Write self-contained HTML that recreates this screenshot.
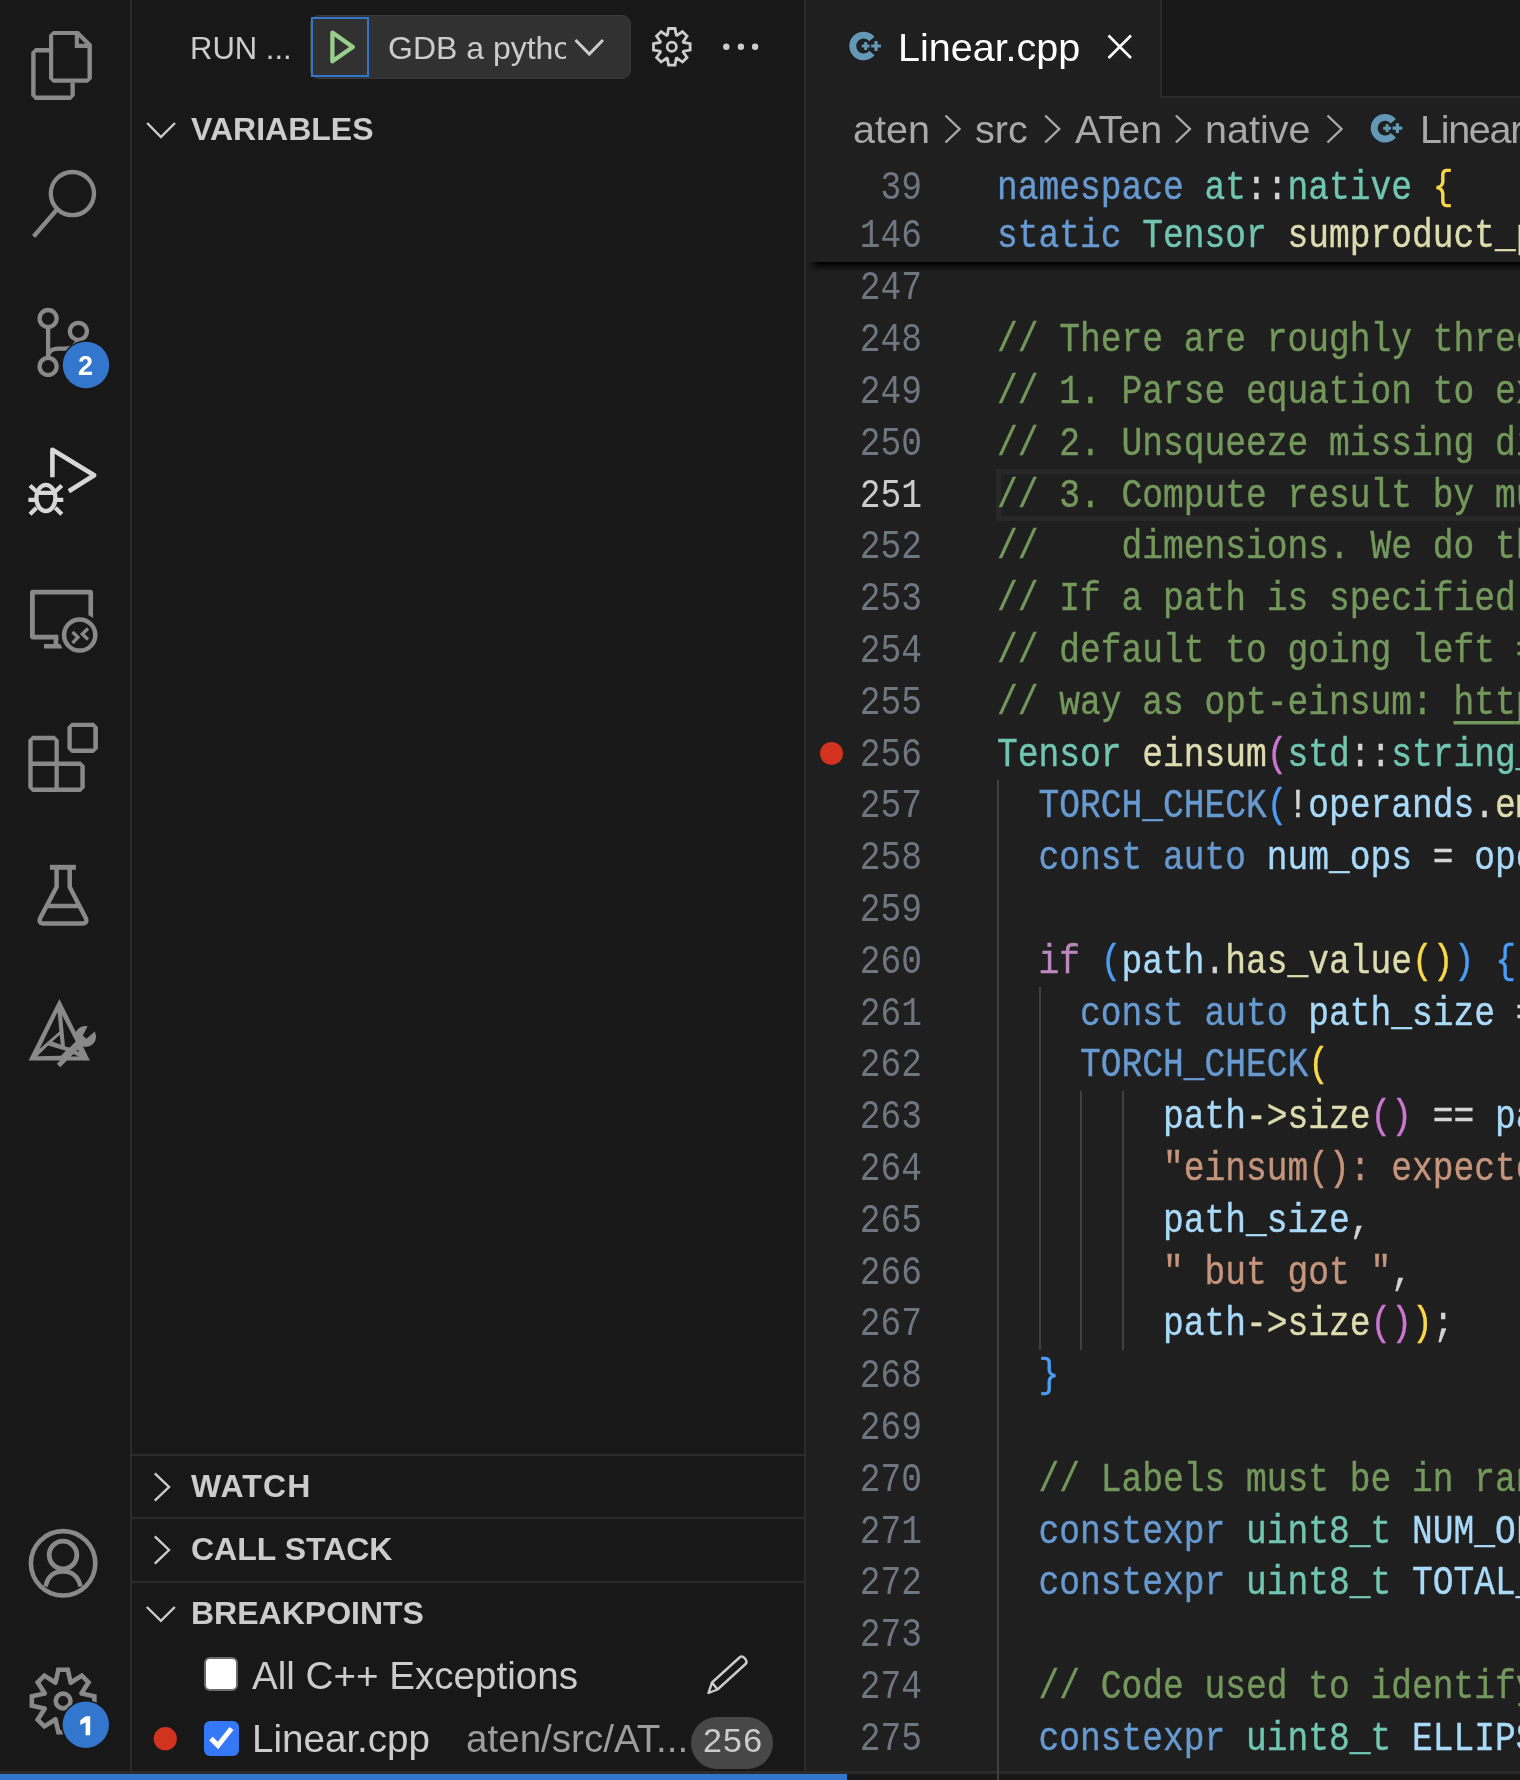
<!DOCTYPE html>
<html><head><meta charset="utf-8"><style>
html,body{margin:0;padding:0;}
body{width:1520px;height:1780px;position:relative;overflow:hidden;background:#181818;}
.t{position:absolute;white-space:pre;will-change:transform;}
</style></head><body>
<div style="position:absolute;left:0px;top:0px;width:130px;height:1780px;background:#181818;"></div><div style="position:absolute;left:130px;top:0px;width:2px;height:1780px;background:#2b2b2b;"></div><div style="position:absolute;left:132px;top:0px;width:672px;height:1780px;background:#181818;"></div><div style="position:absolute;left:804px;top:0px;width:2px;height:1780px;background:#2b2b2b;"></div><div style="position:absolute;left:806px;top:0px;width:714px;height:1780px;background:#1f1f1f;"></div><div style="position:absolute;left:1162px;top:0px;width:358px;height:96px;background:#181818;"></div><div style="position:absolute;left:1160px;top:0px;width:2px;height:98px;background:#2b2b2b;"></div><div style="position:absolute;left:1160px;top:96px;width:360px;height:2px;background:#2b2b2b;"></div><div style="position:absolute;left:0px;top:1771px;width:1520px;height:3px;background:#2b2b2b;"></div><div style="position:absolute;left:0px;top:1774px;width:847px;height:6px;background:#3376cd;"></div><div style="position:absolute;left:847px;top:1774px;width:673px;height:6px;background:#181818;"></div><div style="position:absolute;left:132px;top:1454px;width:672px;height:2px;background:#2b2b2b;"></div><div style="position:absolute;left:132px;top:1517px;width:672px;height:2px;background:#2b2b2b;"></div><div style="position:absolute;left:132px;top:1581px;width:672px;height:2px;background:#2b2b2b;"></div><div class="t" style="left:189.60px;top:31.95px;font-size:31px;line-height:34.63px;color:#cccccc;font-weight:normal;font-family:'Liberation Sans', sans-serif;letter-spacing:0px;">RUN ...</div><div style="position:absolute;left:309.5px;top:15px;width:321px;height:64px;background:#313131;border-radius:9px;box-sizing:border-box;border:1.5px solid #3a3a3a;"></div><div style="position:absolute;left:311px;top:17px;width:57.5px;height:60px;background:transparent;box-sizing:border-box;border:2px solid #3376cd;"></div><div style="position:absolute;left:388px;top:15px;width:178px;height:64px;overflow:hidden"><div class="t" style="left:-0.5px;top:15.64px;font-size:32px;line-height:35.74px;color:#cccccc;font-family:'Liberation Sans', sans-serif">GDB a python</div></div><div class="t" style="left:191.00px;top:111.94px;font-size:32px;line-height:35.74px;color:#cccccc;font-weight:bold;font-family:'Liberation Sans', sans-serif;letter-spacing:0px;">VARIABLES</div><div class="t" style="left:191.00px;top:1469.24px;font-size:32px;line-height:35.74px;color:#cccccc;font-weight:bold;font-family:'Liberation Sans', sans-serif;letter-spacing:1.1px;">WATCH</div><div class="t" style="left:191.00px;top:1532.24px;font-size:32px;line-height:35.74px;color:#cccccc;font-weight:bold;font-family:'Liberation Sans', sans-serif;letter-spacing:0px;">CALL STACK</div><div class="t" style="left:191.00px;top:1596.04px;font-size:32px;line-height:35.74px;color:#cccccc;font-weight:bold;font-family:'Liberation Sans', sans-serif;letter-spacing:0px;">BREAKPOINTS</div><div class="t" style="left:251.60px;top:1654.27px;font-size:38.6px;line-height:43.12px;color:#cccccc;font-weight:normal;font-family:'Liberation Sans', sans-serif;letter-spacing:0px;">All C++ Exceptions</div><div class="t" style="left:251.60px;top:1717.47px;font-size:38.6px;line-height:43.12px;color:#cccccc;font-weight:normal;font-family:'Liberation Sans', sans-serif;letter-spacing:0px;">Linear.cpp</div><div class="t" style="left:465.70px;top:1717.07px;font-size:38.6px;line-height:43.12px;color:#9d9d9d;font-weight:normal;font-family:'Liberation Sans', sans-serif;letter-spacing:0px;">aten/src/AT...</div><div style="position:absolute;left:690.6px;top:1717px;width:82px;height:51.7px;background:#474747;border-radius:26px;"></div><div class="t" style="left:703.30px;top:1721.23px;font-size:34px;line-height:37.98px;color:#cccccc;font-weight:normal;font-family:'Liberation Sans', sans-serif;letter-spacing:1.2px;">256</div><div style="position:absolute;left:204.2px;top:1657.2px;width:34.3px;height:34.3px;background:#ffffff;box-sizing:border-box;border:2.5px solid #6b6b6b;border-radius:6px;"></div><div style="position:absolute;left:204px;top:1721.2px;width:34.8px;height:34.8px;background:#3478f6;border-radius:6px;"></div><div class="t" style="left:898.00px;top:25.25px;font-size:39.5px;line-height:44.12px;color:#ffffff;font-weight:normal;font-family:'Liberation Sans', sans-serif;letter-spacing:0px;">Linear.cpp</div><div class="t" style="left:853.00px;top:107.25px;font-size:39.5px;line-height:44.12px;color:#a9a9a9;font-weight:normal;font-family:'Liberation Sans', sans-serif;letter-spacing:0px;">aten</div><div class="t" style="left:975.30px;top:107.25px;font-size:39.5px;line-height:44.12px;color:#a9a9a9;font-weight:normal;font-family:'Liberation Sans', sans-serif;letter-spacing:0px;">src</div><div class="t" style="left:1074.90px;top:107.25px;font-size:39.5px;line-height:44.12px;color:#a9a9a9;font-weight:normal;font-family:'Liberation Sans', sans-serif;letter-spacing:0px;">ATen</div><div class="t" style="left:1204.70px;top:107.25px;font-size:39.5px;line-height:44.12px;color:#a9a9a9;font-weight:normal;font-family:'Liberation Sans', sans-serif;letter-spacing:0px;">native</div><div class="t" style="left:1419.50px;top:107.25px;font-size:39.5px;line-height:44.12px;color:#a9a9a9;font-weight:normal;font-family:'Liberation Sans', sans-serif;letter-spacing:-1.3px;">Linear</div><div class="t" style="left:700px;width:222px;text-align:right;top:169.69px;font-size:34.58px;line-height:39.18px;font-family:'Liberation Mono', monospace;color:#6f7680;transform:scaleY(1.16);transform-origin:0 28.81px">39</div><div class="t" style="left:996.5px;top:169.69px;font-size:34.58px;line-height:39.18px;font-family:'Liberation Mono', monospace;-webkit-text-stroke:0.35px currentColor;transform:scaleY(1.16);transform-origin:0 28.81px"><span style="color:#679ad1">namespace</span><span style="color:#d4d4d4"> </span><span style="color:#71c6b1">at</span><span style="color:#d4d4d4">::</span><span style="color:#71c6b1">native</span><span style="color:#d4d4d4"> </span><span style="color:#f9d849">{</span></div><div class="t" style="left:700px;width:222px;text-align:right;top:218.29px;font-size:34.58px;line-height:39.18px;font-family:'Liberation Mono', monospace;color:#6f7680;transform:scaleY(1.16);transform-origin:0 28.81px">146</div><div class="t" style="left:996.5px;top:218.29px;font-size:34.58px;line-height:39.18px;font-family:'Liberation Mono', monospace;-webkit-text-stroke:0.35px currentColor;transform:scaleY(1.16);transform-origin:0 28.81px"><span style="color:#679ad1">static</span><span style="color:#d4d4d4"> </span><span style="color:#71c6b1">Tensor</span><span style="color:#d4d4d4"> </span><span style="color:#dcdcaf">sumproduct_pair</span></div><div style="position:absolute;left:806px;top:261.6px;width:714px;height:10px;background:linear-gradient(#000000 0%, rgba(0,0,0,0.6) 35%, rgba(0,0,0,0) 100%);-webkit-mask-image:linear-gradient(to right, rgba(0,0,0,0) 2px, #000 13px);mask-image:linear-gradient(to right, rgba(0,0,0,0) 2px, #000 13px)"></div><div style="position:absolute;left:996px;top:469.1px;width:600px;height:51.8px;background:transparent;box-sizing:border-box;border:5px solid #282828;"></div><div style="position:absolute;left:997.0px;top:779.9px;width:2px;height:1036.0px;background:#404040;"></div><div style="position:absolute;left:1038.5px;top:987.1px;width:2px;height:362.6px;background:#404040;"></div><div style="position:absolute;left:1080.0px;top:1090.7px;width:2px;height:259.0px;background:#404040;"></div><div style="position:absolute;left:1121.5px;top:1090.7px;width:2px;height:259.0px;background:#404040;"></div><div class="t" style="left:700px;width:222px;text-align:right;top:270.49px;font-size:34.58px;line-height:39.18px;font-family:'Liberation Mono', monospace;color:#6f7680;transform:scaleY(1.16);transform-origin:0 28.81px">247</div><div class="t" style="left:700px;width:222px;text-align:right;top:322.29px;font-size:34.58px;line-height:39.18px;font-family:'Liberation Mono', monospace;color:#6f7680;transform:scaleY(1.16);transform-origin:0 28.81px">248</div><div class="t" style="left:996.5px;top:322.29px;font-size:34.58px;line-height:39.18px;font-family:'Liberation Mono', monospace;-webkit-text-stroke:0.35px currentColor;transform:scaleY(1.16);transform-origin:0 28.81px"><span style="color:#74985c">// There are roughly three main steps</span></div><div class="t" style="left:700px;width:222px;text-align:right;top:374.09px;font-size:34.58px;line-height:39.18px;font-family:'Liberation Mono', monospace;color:#6f7680;transform:scaleY(1.16);transform-origin:0 28.81px">249</div><div class="t" style="left:996.5px;top:374.09px;font-size:34.58px;line-height:39.18px;font-family:'Liberation Mono', monospace;-webkit-text-stroke:0.35px currentColor;transform:scaleY(1.16);transform-origin:0 28.81px"><span style="color:#74985c">// 1. Parse equation to extract</span></div><div class="t" style="left:700px;width:222px;text-align:right;top:425.89px;font-size:34.58px;line-height:39.18px;font-family:'Liberation Mono', monospace;color:#6f7680;transform:scaleY(1.16);transform-origin:0 28.81px">250</div><div class="t" style="left:996.5px;top:425.89px;font-size:34.58px;line-height:39.18px;font-family:'Liberation Mono', monospace;-webkit-text-stroke:0.35px currentColor;transform:scaleY(1.16);transform-origin:0 28.81px"><span style="color:#74985c">// 2. Unsqueeze missing dimensions</span></div><div class="t" style="left:700px;width:222px;text-align:right;top:477.69px;font-size:34.58px;line-height:39.18px;font-family:'Liberation Mono', monospace;color:#cccccc;transform:scaleY(1.16);transform-origin:0 28.81px">251</div><div class="t" style="left:996.5px;top:477.69px;font-size:34.58px;line-height:39.18px;font-family:'Liberation Mono', monospace;-webkit-text-stroke:0.35px currentColor;transform:scaleY(1.16);transform-origin:0 28.81px"><span style="color:#74985c">// 3. Compute result by multiplying</span></div><div class="t" style="left:700px;width:222px;text-align:right;top:529.49px;font-size:34.58px;line-height:39.18px;font-family:'Liberation Mono', monospace;color:#6f7680;transform:scaleY(1.16);transform-origin:0 28.81px">252</div><div class="t" style="left:996.5px;top:529.49px;font-size:34.58px;line-height:39.18px;font-family:'Liberation Mono', monospace;-webkit-text-stroke:0.35px currentColor;transform:scaleY(1.16);transform-origin:0 28.81px"><span style="color:#74985c">//    dimensions. We do this</span></div><div class="t" style="left:700px;width:222px;text-align:right;top:581.29px;font-size:34.58px;line-height:39.18px;font-family:'Liberation Mono', monospace;color:#6f7680;transform:scaleY(1.16);transform-origin:0 28.81px">253</div><div class="t" style="left:996.5px;top:581.29px;font-size:34.58px;line-height:39.18px;font-family:'Liberation Mono', monospace;-webkit-text-stroke:0.35px currentColor;transform:scaleY(1.16);transform-origin:0 28.81px"><span style="color:#74985c">// If a path is specified,</span></div><div class="t" style="left:700px;width:222px;text-align:right;top:633.09px;font-size:34.58px;line-height:39.18px;font-family:'Liberation Mono', monospace;color:#6f7680;transform:scaleY(1.16);transform-origin:0 28.81px">254</div><div class="t" style="left:996.5px;top:633.09px;font-size:34.58px;line-height:39.18px;font-family:'Liberation Mono', monospace;-webkit-text-stroke:0.35px currentColor;transform:scaleY(1.16);transform-origin:0 28.81px"><span style="color:#74985c">// default to going left =&gt; right</span></div><div class="t" style="left:700px;width:222px;text-align:right;top:684.89px;font-size:34.58px;line-height:39.18px;font-family:'Liberation Mono', monospace;color:#6f7680;transform:scaleY(1.16);transform-origin:0 28.81px">255</div><div class="t" style="left:996.5px;top:684.89px;font-size:34.58px;line-height:39.18px;font-family:'Liberation Mono', monospace;-webkit-text-stroke:0.35px currentColor;transform:scaleY(1.16);transform-origin:0 28.81px"><span style="color:#74985c">// way as opt-einsum: </span><span style="color:#74985c;text-decoration:underline;text-underline-offset:6px;text-decoration-thickness:3px;text-decoration-skip-ink:none">htt</span><span style="color:#74985c;text-decoration:underline;text-underline-offset:6px;text-decoration-thickness:3px;text-decoration-skip-ink:none">p</span></div><div class="t" style="left:700px;width:222px;text-align:right;top:736.69px;font-size:34.58px;line-height:39.18px;font-family:'Liberation Mono', monospace;color:#6f7680;transform:scaleY(1.16);transform-origin:0 28.81px">256</div><div class="t" style="left:996.5px;top:736.69px;font-size:34.58px;line-height:39.18px;font-family:'Liberation Mono', monospace;-webkit-text-stroke:0.35px currentColor;transform:scaleY(1.16);transform-origin:0 28.81px"><span style="color:#71c6b1">Tensor</span><span style="color:#d4d4d4"> </span><span style="color:#dcdcaf">einsum</span><span style="color:#cc76d1">(</span><span style="color:#71c6b1">std</span><span style="color:#d4d4d4">::</span><span style="color:#71c6b1">string_view</span></div><div class="t" style="left:700px;width:222px;text-align:right;top:788.49px;font-size:34.58px;line-height:39.18px;font-family:'Liberation Mono', monospace;color:#6f7680;transform:scaleY(1.16);transform-origin:0 28.81px">257</div><div class="t" style="left:996.5px;top:788.49px;font-size:34.58px;line-height:39.18px;font-family:'Liberation Mono', monospace;-webkit-text-stroke:0.35px currentColor;transform:scaleY(1.16);transform-origin:0 28.81px"><span style="color:#d4d4d4">  </span><span style="color:#679ad1">TORCH_CHECK</span><span style="color:#4a9df8">(</span><span style="color:#d4d4d4">!</span><span style="color:#aadafa">operands</span><span style="color:#d4d4d4">.</span><span style="color:#dcdcaf">empty</span></div><div class="t" style="left:700px;width:222px;text-align:right;top:840.29px;font-size:34.58px;line-height:39.18px;font-family:'Liberation Mono', monospace;color:#6f7680;transform:scaleY(1.16);transform-origin:0 28.81px">258</div><div class="t" style="left:996.5px;top:840.29px;font-size:34.58px;line-height:39.18px;font-family:'Liberation Mono', monospace;-webkit-text-stroke:0.35px currentColor;transform:scaleY(1.16);transform-origin:0 28.81px"><span style="color:#d4d4d4">  </span><span style="color:#679ad1">const</span><span style="color:#d4d4d4"> </span><span style="color:#679ad1">auto</span><span style="color:#d4d4d4"> </span><span style="color:#aadafa">num_ops</span><span style="color:#d4d4d4"> = </span><span style="color:#aadafa">operands</span></div><div class="t" style="left:700px;width:222px;text-align:right;top:892.09px;font-size:34.58px;line-height:39.18px;font-family:'Liberation Mono', monospace;color:#6f7680;transform:scaleY(1.16);transform-origin:0 28.81px">259</div><div class="t" style="left:700px;width:222px;text-align:right;top:943.89px;font-size:34.58px;line-height:39.18px;font-family:'Liberation Mono', monospace;color:#6f7680;transform:scaleY(1.16);transform-origin:0 28.81px">260</div><div class="t" style="left:996.5px;top:943.89px;font-size:34.58px;line-height:39.18px;font-family:'Liberation Mono', monospace;-webkit-text-stroke:0.35px currentColor;transform:scaleY(1.16);transform-origin:0 28.81px"><span style="color:#d4d4d4">  </span><span style="color:#bc89bd">if</span><span style="color:#d4d4d4"> </span><span style="color:#4a9df8">(</span><span style="color:#aadafa">path</span><span style="color:#d4d4d4">.</span><span style="color:#dcdcaf">has_value</span><span style="color:#f9d849">()</span><span style="color:#4a9df8">)</span><span style="color:#d4d4d4"> </span><span style="color:#4a9df8">{</span></div><div class="t" style="left:700px;width:222px;text-align:right;top:995.69px;font-size:34.58px;line-height:39.18px;font-family:'Liberation Mono', monospace;color:#6f7680;transform:scaleY(1.16);transform-origin:0 28.81px">261</div><div class="t" style="left:996.5px;top:995.69px;font-size:34.58px;line-height:39.18px;font-family:'Liberation Mono', monospace;-webkit-text-stroke:0.35px currentColor;transform:scaleY(1.16);transform-origin:0 28.81px"><span style="color:#d4d4d4">    </span><span style="color:#679ad1">const</span><span style="color:#d4d4d4"> </span><span style="color:#679ad1">auto</span><span style="color:#d4d4d4"> </span><span style="color:#aadafa">path_size</span><span style="color:#d4d4d4"> = </span></div><div class="t" style="left:700px;width:222px;text-align:right;top:1047.49px;font-size:34.58px;line-height:39.18px;font-family:'Liberation Mono', monospace;color:#6f7680;transform:scaleY(1.16);transform-origin:0 28.81px">262</div><div class="t" style="left:996.5px;top:1047.49px;font-size:34.58px;line-height:39.18px;font-family:'Liberation Mono', monospace;-webkit-text-stroke:0.35px currentColor;transform:scaleY(1.16);transform-origin:0 28.81px"><span style="color:#d4d4d4">    </span><span style="color:#679ad1">TORCH_CHECK</span><span style="color:#f9d849">(</span></div><div class="t" style="left:700px;width:222px;text-align:right;top:1099.29px;font-size:34.58px;line-height:39.18px;font-family:'Liberation Mono', monospace;color:#6f7680;transform:scaleY(1.16);transform-origin:0 28.81px">263</div><div class="t" style="left:996.5px;top:1099.29px;font-size:34.58px;line-height:39.18px;font-family:'Liberation Mono', monospace;-webkit-text-stroke:0.35px currentColor;transform:scaleY(1.16);transform-origin:0 28.81px"><span style="color:#d4d4d4">        </span><span style="color:#aadafa">path</span><span style="color:#dcdcaf">-&gt;</span><span style="color:#dcdcaf">size</span><span style="color:#cc76d1">()</span><span style="color:#d4d4d4"> == </span><span style="color:#aadafa">path_size</span></div><div class="t" style="left:700px;width:222px;text-align:right;top:1151.09px;font-size:34.58px;line-height:39.18px;font-family:'Liberation Mono', monospace;color:#6f7680;transform:scaleY(1.16);transform-origin:0 28.81px">264</div><div class="t" style="left:996.5px;top:1151.09px;font-size:34.58px;line-height:39.18px;font-family:'Liberation Mono', monospace;-webkit-text-stroke:0.35px currentColor;transform:scaleY(1.16);transform-origin:0 28.81px"><span style="color:#d4d4d4">        </span><span style="color:#c5947c">&quot;einsum(): expected</span></div><div class="t" style="left:700px;width:222px;text-align:right;top:1202.89px;font-size:34.58px;line-height:39.18px;font-family:'Liberation Mono', monospace;color:#6f7680;transform:scaleY(1.16);transform-origin:0 28.81px">265</div><div class="t" style="left:996.5px;top:1202.89px;font-size:34.58px;line-height:39.18px;font-family:'Liberation Mono', monospace;-webkit-text-stroke:0.35px currentColor;transform:scaleY(1.16);transform-origin:0 28.81px"><span style="color:#d4d4d4">        </span><span style="color:#aadafa">path_size</span><span style="color:#d4d4d4">,</span></div><div class="t" style="left:700px;width:222px;text-align:right;top:1254.69px;font-size:34.58px;line-height:39.18px;font-family:'Liberation Mono', monospace;color:#6f7680;transform:scaleY(1.16);transform-origin:0 28.81px">266</div><div class="t" style="left:996.5px;top:1254.69px;font-size:34.58px;line-height:39.18px;font-family:'Liberation Mono', monospace;-webkit-text-stroke:0.35px currentColor;transform:scaleY(1.16);transform-origin:0 28.81px"><span style="color:#d4d4d4">        </span><span style="color:#c5947c">&quot; but got &quot;</span><span style="color:#d4d4d4">,</span></div><div class="t" style="left:700px;width:222px;text-align:right;top:1306.49px;font-size:34.58px;line-height:39.18px;font-family:'Liberation Mono', monospace;color:#6f7680;transform:scaleY(1.16);transform-origin:0 28.81px">267</div><div class="t" style="left:996.5px;top:1306.49px;font-size:34.58px;line-height:39.18px;font-family:'Liberation Mono', monospace;-webkit-text-stroke:0.35px currentColor;transform:scaleY(1.16);transform-origin:0 28.81px"><span style="color:#d4d4d4">        </span><span style="color:#aadafa">path</span><span style="color:#dcdcaf">-&gt;</span><span style="color:#dcdcaf">size</span><span style="color:#cc76d1">()</span><span style="color:#f9d849">)</span><span style="color:#d4d4d4">;</span></div><div class="t" style="left:700px;width:222px;text-align:right;top:1358.29px;font-size:34.58px;line-height:39.18px;font-family:'Liberation Mono', monospace;color:#6f7680;transform:scaleY(1.16);transform-origin:0 28.81px">268</div><div class="t" style="left:996.5px;top:1358.29px;font-size:34.58px;line-height:39.18px;font-family:'Liberation Mono', monospace;-webkit-text-stroke:0.35px currentColor;transform:scaleY(1.16);transform-origin:0 28.81px"><span style="color:#d4d4d4">  </span><span style="color:#4a9df8">}</span></div><div class="t" style="left:700px;width:222px;text-align:right;top:1410.09px;font-size:34.58px;line-height:39.18px;font-family:'Liberation Mono', monospace;color:#6f7680;transform:scaleY(1.16);transform-origin:0 28.81px">269</div><div class="t" style="left:700px;width:222px;text-align:right;top:1461.89px;font-size:34.58px;line-height:39.18px;font-family:'Liberation Mono', monospace;color:#6f7680;transform:scaleY(1.16);transform-origin:0 28.81px">270</div><div class="t" style="left:996.5px;top:1461.89px;font-size:34.58px;line-height:39.18px;font-family:'Liberation Mono', monospace;-webkit-text-stroke:0.35px currentColor;transform:scaleY(1.16);transform-origin:0 28.81px"><span style="color:#d4d4d4">  </span><span style="color:#74985c">// Labels must be in range</span></div><div class="t" style="left:700px;width:222px;text-align:right;top:1513.69px;font-size:34.58px;line-height:39.18px;font-family:'Liberation Mono', monospace;color:#6f7680;transform:scaleY(1.16);transform-origin:0 28.81px">271</div><div class="t" style="left:996.5px;top:1513.69px;font-size:34.58px;line-height:39.18px;font-family:'Liberation Mono', monospace;-webkit-text-stroke:0.35px currentColor;transform:scaleY(1.16);transform-origin:0 28.81px"><span style="color:#d4d4d4">  </span><span style="color:#679ad1">constexpr</span><span style="color:#d4d4d4"> </span><span style="color:#71c6b1">uint8_t</span><span style="color:#d4d4d4"> </span><span style="color:#aadafa">NUM_OF_LETTERS</span></div><div class="t" style="left:700px;width:222px;text-align:right;top:1565.49px;font-size:34.58px;line-height:39.18px;font-family:'Liberation Mono', monospace;color:#6f7680;transform:scaleY(1.16);transform-origin:0 28.81px">272</div><div class="t" style="left:996.5px;top:1565.49px;font-size:34.58px;line-height:39.18px;font-family:'Liberation Mono', monospace;-webkit-text-stroke:0.35px currentColor;transform:scaleY(1.16);transform-origin:0 28.81px"><span style="color:#d4d4d4">  </span><span style="color:#679ad1">constexpr</span><span style="color:#d4d4d4"> </span><span style="color:#71c6b1">uint8_t</span><span style="color:#d4d4d4"> </span><span style="color:#aadafa">TOTAL_LABELS</span></div><div class="t" style="left:700px;width:222px;text-align:right;top:1617.29px;font-size:34.58px;line-height:39.18px;font-family:'Liberation Mono', monospace;color:#6f7680;transform:scaleY(1.16);transform-origin:0 28.81px">273</div><div class="t" style="left:700px;width:222px;text-align:right;top:1669.09px;font-size:34.58px;line-height:39.18px;font-family:'Liberation Mono', monospace;color:#6f7680;transform:scaleY(1.16);transform-origin:0 28.81px">274</div><div class="t" style="left:996.5px;top:1669.09px;font-size:34.58px;line-height:39.18px;font-family:'Liberation Mono', monospace;-webkit-text-stroke:0.35px currentColor;transform:scaleY(1.16);transform-origin:0 28.81px"><span style="color:#d4d4d4">  </span><span style="color:#74985c">// Code used to identify</span></div><div class="t" style="left:700px;width:222px;text-align:right;top:1720.89px;font-size:34.58px;line-height:39.18px;font-family:'Liberation Mono', monospace;color:#6f7680;transform:scaleY(1.16);transform-origin:0 28.81px">275</div><div class="t" style="left:996.5px;top:1720.89px;font-size:34.58px;line-height:39.18px;font-family:'Liberation Mono', monospace;-webkit-text-stroke:0.35px currentColor;transform:scaleY(1.16);transform-origin:0 28.81px"><span style="color:#d4d4d4">  </span><span style="color:#679ad1">constexpr</span><span style="color:#d4d4d4"> </span><span style="color:#71c6b1">uint8_t</span><span style="color:#d4d4d4"> </span><span style="color:#aadafa">ELLIPSIS</span></div><div style="position:absolute;left:820.3px;top:742.4px;width:23px;height:23px;border-radius:50%;background:#d2331f"></div><svg style="position:absolute;left:0;top:0" width="1520" height="1780" viewBox="0 0 1520 1780"><path fill-rule="evenodd" fill="#898989" d="M49 35.1 L53.1 31 L78.6 31 L91.9 44.3 L91.9 78.7 L87.8 82.8 L53.1 82.8 L49 78.7 Z M53.2 35.1 L74.8 35.1 L74.8 48.1 L87.5 48.1 L87.5 78.6 L53.2 78.6 Z M78.9 37.2 L85.3 43.7 L78.9 43.7 Z"/><path fill="#898989" d="M31.2 52.2 L35.3 48.1 L49 48.1 L49 52.4 L35.6 52.4 L35.6 95.5 L70.5 95.5 L70.5 82.8 L74.8 82.8 L74.8 95.8 L70.7 99.9 L35.3 99.9 L31.2 95.8 Z"/><circle cx="72.4" cy="193.6" r="21.6" stroke="#898989" fill="none" stroke-width="4.3"/><line x1="57" y1="209.5" x2="33.6" y2="236.5" stroke="#898989" stroke-width="4.3"/><circle cx="48.1" cy="318.5" r="8.5" stroke="#898989" fill="none" stroke-width="4.3"/><circle cx="78.4" cy="331.3" r="8.5" stroke="#898989" fill="none" stroke-width="4.3"/><circle cx="48.1" cy="366.4" r="8.5" stroke="#898989" fill="none" stroke-width="4.3"/><path d="M48.1 327 L48.1 358 M48.1 357 C48.1 352 52 348.6 58 348.6 L66 348.6 C72 348.6 76 345 78 340" stroke="#898989" fill="none" stroke-width="4.3"/><path d="M52.4 477.3 L52.4 449.7 L94.2 475.2 L68.8 491.3" stroke="#d7d7d7" stroke-width="4.6" fill="none" stroke-linejoin="round"/><ellipse cx="45.9" cy="498" rx="9.5" ry="13.2" stroke="#d7d7d7" fill="none" stroke-width="4.3"/><path d="M36.5 492.8 L55.3 492.8 M28.4 499.8 L36 499.8 M55.8 499.8 L63.3 499.8 M30 485.5 L36.5 491.5 M61.8 485.5 L55.3 491.5 M30 514.2 L36.5 507.8 M61.8 514.2 L55.3 507.8" stroke="#d7d7d7" stroke-width="4.3" fill="none"/><path fill-rule="evenodd" fill="#898989" d="M33 589.8 L90.1 589.8 Q93.1 589.8 93.1 592.8 L93.1 639.5 L33 639.5 Q30 639.5 30 636.5 L30 592.8 Q30 589.8 33 589.8 Z M34.8 594.6 L34.8 634.8 L88.4 634.8 L88.4 594.6 Z"/><path fill="#898989" d="M44 644 L62 644 L62 648.4 L44 648.4 Z M53.6 639 L58.2 639 L58.2 644.5 L53.6 644.5 Z"/><circle cx="79.7" cy="635" r="21.6" fill="#181818"/><circle cx="79.7" cy="635" r="15.6" stroke="#898989" stroke-width="4.5" fill="none"/><path d="M72.5 632 L78 637.3 L72.5 643 M88 628.5 L82.3 634 L88 639.5" stroke="#898989" stroke-width="3.3" fill="none"/><path fill-rule="evenodd" fill="#898989" d="M28.3 740 L32.4 735.8 L54.6 735.8 L58.8 740 L58.8 761.6 L80.6 761.6 L84.8 765.8 L84.8 787.8 L80.6 792 L32.4 792 L28.3 787.8 Z M32.7 740.2 L54.5 740.2 L54.5 761.6 L32.7 761.6 Z M32.7 765.9 L54.5 765.9 L54.5 787.6 L32.7 787.6 Z M58.8 765.9 L80.3 765.9 L80.3 787.6 L58.8 787.6 Z"/><path fill-rule="evenodd" fill="#898989" d="M67.4 726.9 L71.6 722.7 L93.7 722.7 L97.9 726.9 L97.9 748.7 L93.7 752.9 L71.6 752.9 L67.4 748.7 Z M71.8 727.1 L93.3 727.1 L93.3 748.6 L71.8 748.6 Z"/><path d="M49.9 867.3 L75.9 867.3" stroke="#898989" stroke-width="5" fill="none"/><path d="M56.6 869 L56.6 887 L40 918.5 Q38.5 923.4 43 923.4 L83 923.4 Q87.5 923.4 86 918.5 L69.7 887 L69.7 869 M48.3 906 L79 906" stroke="#898989" stroke-width="4.5" fill="none" stroke-linejoin="round"/><path fill-rule="evenodd" fill="#898989" d="M59.4 998.9 L89.9 1060.5 L28.6 1060.5 Z M57.6 1011.9 L39.5 1048.9 L59.4 1031.4 Z M59.7 1035 L52.3 1041.5 L60.9 1044.8 Z M62 1014.9 L65 1046.5 L69.7 1047.4 L75.7 1041.5 Z M37.2 1056.3 L48.1 1045.4 L65.9 1050.7 L60.9 1055.7 Z M69.1 1056.6 L72.1 1053.4 L78.9 1056.6 Z M75 1050.4 L77.4 1048.6 L79.2 1051.9 Z"/><path d="M58.5 1065.5 L80 1044" stroke="#898989" stroke-width="4.8" fill="none"/><circle cx="85.5" cy="1036.5" r="10.6" fill="#898989"/><path fill="#181818" d="M89 1023.5 L96 1030.5 L86.3 1038.8 L82.8 1035.6 Z"/><circle cx="63.1" cy="1563.3" r="32.2" stroke="#898989" stroke-width="4.6" fill="none"/><circle cx="63" cy="1555" r="13.8" stroke="#898989" stroke-width="4.8" fill="none"/><path d="M45.6 1586.5 C 48 1575 55 1571.5 63 1571.5 C 71 1571.5 78 1575 80.5 1586.5" stroke="#898989" stroke-width="4.6" fill="none"/><path d="M55.54 1682.48 L58.37 1669.76 L67.83 1669.76 L70.66 1682.48 L70.85 1682.56 L81.85 1675.56 L88.54 1682.25 L81.54 1693.25 L81.62 1693.44 L94.34 1696.27 L94.34 1705.73 L81.62 1708.56 L81.54 1708.75 L88.54 1719.75 L81.85 1726.44 L70.85 1719.44 L70.66 1719.52 L67.83 1732.24 L58.37 1732.24 L55.54 1719.52 L55.35 1719.44 L44.35 1726.44 L37.66 1719.75 L44.66 1708.75 L44.58 1708.56 L31.86 1705.73 L31.86 1696.27 L44.58 1693.44 L44.66 1693.25 L37.66 1682.25 L44.35 1675.56 L55.35 1682.56 Z" stroke="#898989" stroke-width="4.6" fill="none" stroke-linejoin="miter"/><circle cx="63.1" cy="1701" r="7.4" stroke="#898989" stroke-width="4.6" fill="none"/><circle cx="86" cy="365" r="24.7" fill="#181818"/><circle cx="86" cy="365" r="23.2" fill="#3376cd"/><circle cx="85.8" cy="1724.7" r="24.7" fill="#181818"/><circle cx="85.8" cy="1724.7" r="23.2" fill="#3376cd"/><path d="M332.4 32.6 L352.8 47 L332.4 61.3 Z" stroke="#99cf8c" stroke-width="4.3" fill="none" stroke-linejoin="round"/><path d="M575.5 40 L589.3 54 L603 40" stroke="#cccccc" stroke-width="3" fill="none"/><path d="M667.40 35.10 L668.57 28.48 L675.03 28.48 L676.20 35.10 L676.96 35.41 L682.47 31.56 L687.04 36.13 L683.19 41.64 L683.50 42.40 L690.12 43.57 L690.12 50.03 L683.50 51.20 L683.19 51.96 L687.04 57.47 L682.47 62.04 L676.96 58.19 L676.20 58.50 L675.03 65.12 L668.57 65.12 L667.40 58.50 L666.64 58.19 L661.13 62.04 L656.56 57.47 L660.41 51.96 L660.10 51.20 L653.48 50.03 L653.48 43.57 L660.10 42.40 L660.41 41.64 L656.56 36.13 L661.13 31.56 L666.64 35.41 Z" stroke="#cccccc" stroke-width="2.8" fill="none"/><circle cx="671.8" cy="46.8" r="4.6" stroke="#cccccc" stroke-width="2.8" fill="none"/><circle cx="726.3" cy="46.8" r="3.2" fill="#cccccc"/><circle cx="740.9" cy="46.8" r="3.2" fill="#cccccc"/><circle cx="755.1" cy="46.8" r="3.2" fill="#cccccc"/><path d="M147.2 123 L160.9 137 L175 123" stroke="#cccccc" stroke-width="2.4" fill="none"/><path d="M146.8 1607 L160.9 1620.9 L174.8 1607" stroke="#cccccc" stroke-width="2.4" fill="none"/><path d="M154.8 1473.4 L169 1487 L154.8 1500.7" stroke="#cccccc" stroke-width="2.4" fill="none"/><path d="M154.8 1536.4 L169 1550 L154.8 1563.7" stroke="#cccccc" stroke-width="2.4" fill="none"/><path d="M211 1738.5 L218 1745.5 L231.5 1728.5" stroke="#ffffff" stroke-width="5" fill="none"/><circle cx="165.3" cy="1738.7" r="11.6" fill="#d2331f"/><path d="M708.5 1693 L712 1682.5 L739.5 1657.5 Q742 1655.5 744.5 1658 L746 1660 Q747.5 1662.5 745 1664.5 L717.5 1689.5 Z M712 1682.5 L717.5 1689.5" stroke="#cccccc" stroke-width="2.4" fill="none" stroke-linejoin="round"/><path d="M1108.5 35.5 L1131 58 M1131 35.5 L1108.5 58" stroke="#ffffff" stroke-width="2.6" fill="none"/><path d="M945.5 115.5 L959.5 129 L945.5 142.5" stroke="#a9a9a9" stroke-width="2.4" fill="none"/><path d="M1045.2 115.5 L1059.2 129 L1045.2 142.5" stroke="#a9a9a9" stroke-width="2.4" fill="none"/><path d="M1175.9 115.5 L1189.9 129 L1175.9 142.5" stroke="#a9a9a9" stroke-width="2.4" fill="none"/><path d="M1327.5 115.5 L1341.5 129 L1327.5 142.5" stroke="#a9a9a9" stroke-width="2.4" fill="none"/><g transform="translate(0,0)"><path fill="#6398b7" d="M874.55 36.81 A14.3 14.3 0 1 0 874.55 55.19 L869.27 50.76 A7.4 7.4 0 1 1 869.27 41.24 Z"/><path fill="#6398b7" d="M861.8 44.5 H869.6 V47.5 H861.8 Z M864.2 42.1 H867.2 V49.9 H864.2 Z M871.1 44.4 H880.9 V47.6 H871.1 Z M874.4 41.1 H877.6 V50.9 H874.4 Z"/></g><g transform="translate(521.4,82.2)"><path fill="#6398b7" d="M874.55 36.81 A14.3 14.3 0 1 0 874.55 55.19 L869.27 50.76 A7.4 7.4 0 1 1 869.27 41.24 Z"/><path fill="#6398b7" d="M861.8 44.5 H869.6 V47.5 H861.8 Z M864.2 42.1 H867.2 V49.9 H864.2 Z M871.1 44.4 H880.9 V47.6 H871.1 Z M874.4 41.1 H877.6 V50.9 H874.4 Z"/></g><path fill="#ffffff" d="M80.3 1720.3 L85.6 1716.2 L90.2 1716.2 L90.2 1735.2 L85.6 1735.2 L85.6 1722.2 L80.3 1725 Z"/></svg><div class="t" style="left:78.00px;top:350.56px;font-size:27px;line-height:30.16px;color:#ffffff;font-weight:bold;font-family:'Liberation Sans', sans-serif;letter-spacing:0px;">2</div>
</body></html>
